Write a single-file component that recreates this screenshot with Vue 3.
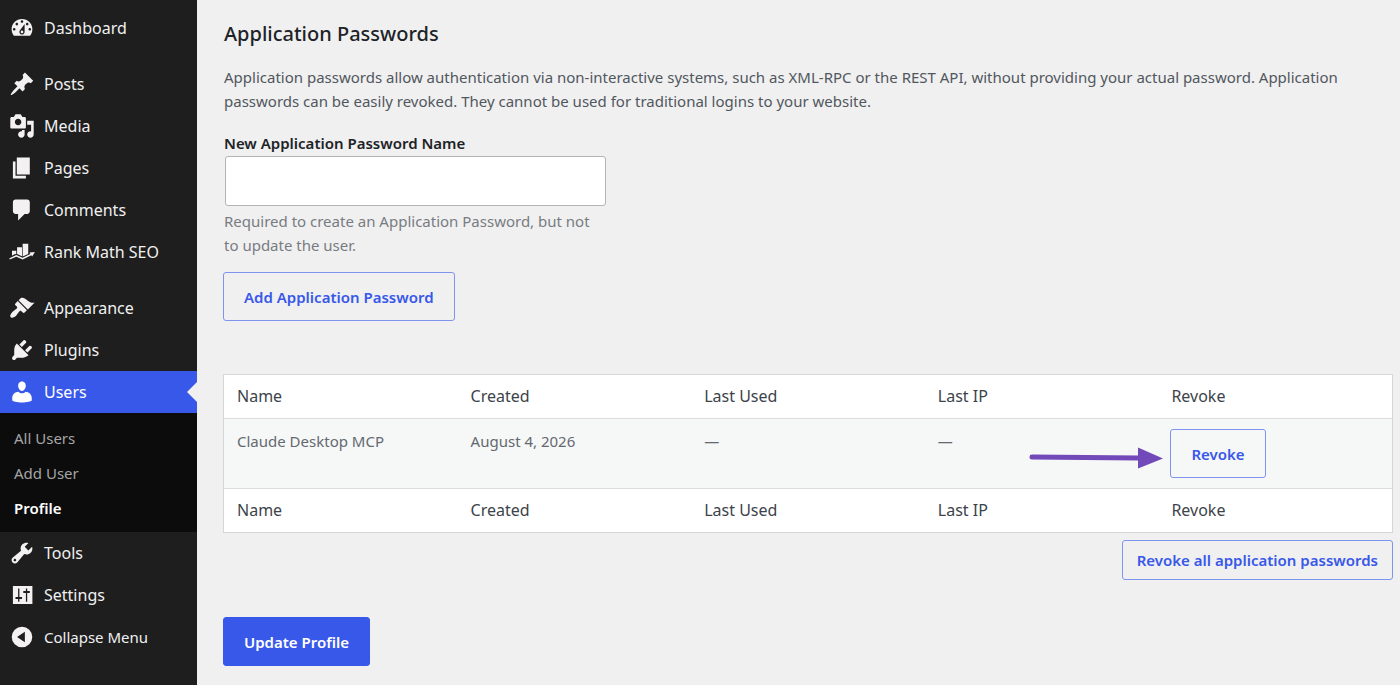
<script setup>
import { ref } from 'vue'

const icons = {
  dashboard: 'M3.76 16h12.48c1.1-1.37 1.76-3.11 1.76-5 0-4.42-3.58-8-8-8s-8 3.58-8 8c0 1.89.66 3.63 1.76 5zM10 4c.55 0 1 .45 1 1s-.45 1-1 1-1-.45-1-1 .45-1 1-1zM6 6c.55 0 1 .45 1 1s-.45 1-1 1-1-.45-1-1 .45-1 1-1zm8 0c.55 0 1 .45 1 1s-.45 1-1 1-1-.45-1-1 .45-1 1-1zm-5.37 5.55L12 7v6c0 1.1-.9 2-2 2s-2-.9-2-2c0-.57.24-1.08.63-1.45zM4 10c.55 0 1 .45 1 1s-.45 1-1 1-1-.45-1-1 .45-1 1-1zm12 0c.55 0 1 .45 1 1s-.45 1-1 1-1-.45-1-1 .45-1 1-1zm-5 3c0-.55-.45-1-1-1s-1 .45-1 1 .45 1 1 1 1-.45 1-1z',
  posts: 'M10.44 3.02l1.82-1.82 6.36 6.35-1.83 1.82c-1.05-.68-2.48-.57-3.41.36l-.75.75c-.92.93-1.04 2.35-.35 3.41l-1.83 1.82-2.41-2.41-2.8 2.79c-.42.42-3.38 2.71-3.8 2.29s1.86-3.39 2.28-3.81l2.79-2.79L4.1 9.36l1.83-1.82c1.05.69 2.48.57 3.4-.36l.75-.75c.93-.92 1.05-2.35.36-3.41z',
  media: 'M13 11V4c0-.55-.45-1-1-1h-1.67L9 1H5L3.67 3H2c-.55 0-1 .45-1 1v7c0 .55.45 1 1 1h10c.55 0 1-.45 1-1zM7 4.5c1.38 0 2.5 1.12 2.5 2.5S8.38 9.5 7 9.5 4.5 8.38 4.5 7 5.62 4.5 7 4.5zM14 6h5v10.5c0 1.38-1.12 2.5-2.5 2.5S14 17.88 14 16.5s1.12-2.5 2.5-2.5c.17 0 .34.02.5.05V9h-3V6zm-4 8.05V13h2v3.5c0 1.38-1.12 2.5-2.5 2.5S7 17.88 7 16.5 8.12 14 9.5 14c.17 0 .34.02.5.05z',
  pages: 'M6 15V2h10v13H6zm-1 1h8v2H3V5h2v11z',
  comments: 'M5 2h9c1.1 0 2 .9 2 2v7c0 1.1-.9 2-2 2h-2l-5 5v-5H5c-1.1 0-2-.9-2-2V4c0-1.1.9-2 2-2z',
  rank: 'M2.3 9h3.3v2.6l-1.4.2-1.9 1zM6.2 6.4H10v6.8l-3.8-1.6zM10.5 3.6h4.3v7.9l-4.3 1.9zM.3 14.9l5.3-2.6 4.9 2.1 5.9-2.9-.6-1.1 4.1-.4-2.1 3.5-.6-1-6.7 3.3-4.9-2.1-5 2.1z',
  appearance: 'M14.48 11.06L7.41 3.99l1.5-1.5c.5-.56 2.3-.47 3.51.32 1.21.8 1.43 1.28 2.91 2.1 1.18.64 2.45 1.26 4.45.85zm-.71.71L6.7 4.7 4.93 6.47c-.39.39-.39 1.02 0 1.41l1.06 1.06c.39.39.39 1.03 0 1.42-.6.6-1.43 1.11-2.21 1.69-.35.26-.7.53-1.01.84C1.43 14.23.4 16.08 1.4 17.07c.99 1 2.84-.03 4.18-1.36.31-.31.58-.66.85-1.02.57-.78 1.08-1.61 1.69-2.21.39-.39 1.02-.39 1.41 0l1.06 1.06c.39.39 1.02.39 1.41 0z',
  plugins: 'M13.11 4.36L9.87 7.6 8 5.73l3.24-3.24c.35-.34 1.05-.2 1.56.32.52.51.66 1.21.31 1.55zm-8 1.77l.91-1.12 9.01 9.01-1.19.84c-.71.71-2.63 1.16-3.82 1.16H6.14L4.9 17.26c-.59.59-1.54.59-2.12 0-.59-.58-.59-1.53 0-2.12l1.24-1.24v-3.88c0-1.13.4-3.19 1.09-3.89zm7.26 3.97l3.24-3.24c.34-.35 1.04-.21 1.55.31.52.51.66 1.21.31 1.55l-3.24 3.25z',
  users: 'M10 9.25c-2.27 0-2.9-3.44-2.9-3.44C6.8 4.02 7.8 2 9.97 2c2.16 0 3.2 2.02 2.9 3.81 0 0-.6 3.44-2.87 3.44zM7.3 9.8C8 10.7 9 11 10 11s2-.3 2.7-1.2c2.5 0 4.8 2.25 4.8 4.7v1.9c0 .8-3.8 1.75-7.5 1.75s-7.5-.95-7.5-1.75v-1.9c0-2.45 2.2-4.7 4.8-4.7z',
  tools: 'M16.68 9.77c-1.34 1.34-3.3 1.67-4.95.99l-5.41 6.52c-.99.99-2.59.99-3.58 0s-.99-2.59 0-3.57l6.52-5.42c-.68-1.65-.35-3.61.99-4.95 1.28-1.28 3.12-1.62 4.72-1.06l-2.89 2.89 2.82 2.82 2.86-2.87c.53 1.58.18 3.39-1.08 4.65zM3.81 16.21c.4.39 1.04.39 1.43 0 .4-.4.4-1.04 0-1.43-.39-.4-1.03-.4-1.43 0-.39.39-.39 1.03 0 1.43z',
  settings: 'M18 17V3H3v14h15zM8 11.5h2V13H8v2.2H7V13H5v-1.5h2V5h1v6.5zM14 8.5v6.7h-1V8.5h-2V7h2V5h1v2h2v1.5z',
  collapse: 'M10 2.1a7.9 7.9 0 1 0 0 15.8 7.9 7.9 0 0 0 0-15.8zM12.2 6v8L6.2 10z',
}

const menu = [
  { label: 'Dashboard', icon: 'dashboard' },
  { label: 'Posts', icon: 'posts', gap: true },
  { label: 'Media', icon: 'media' },
  { label: 'Pages', icon: 'pages' },
  { label: 'Comments', icon: 'comments' },
  { label: 'Rank Math SEO', icon: 'rank' },
  { label: 'Appearance', icon: 'appearance', gap: true },
  { label: 'Plugins', icon: 'plugins' },
  { label: 'Users', icon: 'users', active: true, children: ['All Users', 'Add User', 'Profile'] },
  { label: 'Tools', icon: 'tools' },
  { label: 'Settings', icon: 'settings' },
]

const columns = ['Name', 'Created', 'Last Used', 'Last IP', 'Revoke']
const passwords = [{ name: 'Claude Desktop MCP', created: 'August 4, 2026', used: '—', ip: '—' }]
const newName = ref('')
</script>

<template>
  <div class="admin">
    <nav class="sidebar" aria-label="Main menu">
      <ul class="menu">
        <li v-for="item in menu" :key="item.label" :class="{ gap: item.gap }">
          <a href="#" class="item" :class="{ active: item.active }">
            <svg class="icon" viewBox="0 0 20 20" aria-hidden="true"><path fill-rule="evenodd" :d="icons[item.icon]" /></svg>
            <span>{{ item.label }}</span>
          </a>
          <ul v-if="item.children" class="submenu">
            <li v-for="child in item.children" :key="child">
              <a href="#" :class="{ current: child === 'Profile' }">{{ child }}</a>
            </li>
          </ul>
        </li>
        <li>
          <button type="button" class="item collapse">
            <svg class="icon" viewBox="0 0 20 20" aria-hidden="true"><path fill-rule="evenodd" :d="icons.collapse" /></svg>
            <span>Collapse Menu</span>
          </button>
        </li>
      </ul>
    </nav>

    <main class="content">
      <h2>Application Passwords</h2>
      <p class="intro">Application passwords allow authentication via non-interactive systems, such as XML-RPC or the REST API, without providing your actual password. Application passwords can be easily revoked. They cannot be used for traditional logins to your website.</p>

      <div class="field">
        <label for="app-name">New Application Password Name</label>
        <input id="app-name" v-model="newName" type="text" aria-describedby="app-name-desc" />
        <p id="app-name-desc" class="hint">Required to create an Application Password, but not to update the user.</p>
      </div>
      <button type="button" class="btn">Add Application Password</button>

      <table class="list">
        <thead>
          <tr><th v-for="c in columns" :key="c" scope="col">{{ c }}</th></tr>
        </thead>
        <tbody>
          <tr v-for="p in passwords" :key="p.name">
            <td>{{ p.name }}</td>
            <td>{{ p.created }}</td>
            <td>{{ p.used }}</td>
            <td>{{ p.ip }}</td>
            <td class="action">
              <div class="target">
                <svg class="pointer" viewBox="0 0 134 22" aria-hidden="true">
                  <path d="M3 10L110 11" stroke="#7249b8" stroke-width="5" stroke-linecap="round" />
                  <path d="M109 .5L134 11.5 109 21.5z" fill="#7249b8" />
                </svg>
                <button type="button" class="btn">Revoke</button>
              </div>
            </td>
          </tr>
        </tbody>
        <tfoot>
          <tr><th v-for="c in columns" :key="c" scope="col">{{ c }}</th></tr>
        </tfoot>
      </table>

      <div class="bulk"><button type="button" class="btn small">Revoke all application passwords</button></div>
      <button type="submit" class="btn primary">Update Profile</button>
    </main>
  </div>
</template>

<style>
body {
  margin: 0;
  background: #f0f0f0;
}
</style>

<style scoped>
.admin {
  display: flex;
  min-height: 100vh;
  font-family: "Noto Sans", "Open Sans", sans-serif;
  font-size: 15px;
  line-height: 24px;
  color: #50575e;
}
.admin * {
  box-sizing: border-box;
}
.sidebar {
  flex: none;
  width: 197px;
  padding-top: 7px;
  background: #1e1e1e;
}
ul {
  margin: 0;
  padding: 0;
  list-style: none;
}
.gap {
  margin-top: 14px;
}
.item {
  position: relative;
  display: flex;
  align-items: center;
  gap: 9px;
  width: 100%;
  height: 42px;
  padding: 0 9px;
  color: #f0f0f1;
  font-size: 16px;
  text-decoration: none;
}
.icon {
  flex: none;
  width: 26px;
  height: 26px;
  fill: #f3f1f1;
}
.item.active {
  background: #3858e9;
  color: #fff;
}
.active .icon {
  fill: #fff;
}
.item.active::after {
  content: "";
  position: absolute;
  right: 0;
  top: 11px;
  border: 10px solid transparent;
  border-left: 0;
  border-right-color: #f0f0f0;
}
.collapse {
  border: 0;
  background: none;
  font-family: inherit;
  font-size: 15px;
  text-align: left;
}
.submenu {
  padding: 8px 0 6px;
  background: #0c0c0c;
}
.submenu a {
  display: block;
  padding: 0 14px;
  line-height: 35px;
  color: #a5a5a6;
  text-decoration: none;
}
.submenu .current {
  color: #fff;
  font-weight: 600;
}
.content {
  flex: 1;
  min-width: 0;
  padding: 20px 7px 19px 26px;
}
h2 {
  margin: 0 0 17px;
  padding-left: 1px;
  font-size: 20px;
  line-height: 28px;
  font-weight: 500;
  color: #1d2327;
}
.intro {
  margin: 0 0 18px;
  padding-left: 1px;
}
.field {
  display: flex;
  flex-direction: column;
  max-width: 383px;
  margin-bottom: 15px;
  padding-left: 1px;
}
.field label {
  margin-bottom: 1px;
  font-weight: 600;
  color: #1d2327;
}
.field input {
  height: 50px;
  margin: 0 0 3px 1px;
  padding: 0 12px;
  border: 1px solid #b4b4b6;
  border-radius: 3px;
  background: #fff;
  font: inherit;
}
.hint {
  margin: 0;
  color: #787c82;
}
.btn {
  height: 49px;
  padding: 0 20px;
  border: 1px solid #7f94f0;
  border-radius: 3px;
  background: transparent;
  font-family: inherit;
  font-size: 15px;
  font-weight: 600;
  color: #3858e9;
  white-space: nowrap;
}
.list {
  width: 100%;
  margin-top: 53px;
  border: 1px solid #d5d6d8;
  border-collapse: separate;
  border-spacing: 0;
  table-layout: fixed;
  background: #fff;
}
.list th,
.list td {
  padding: 10px 13px;
  text-align: left;
  vertical-align: top;
  font-weight: 400;
}
.list th {
  padding-top: 9px;
  font-size: 16px;
  color: #3c434a;
}
.list tbody td {
  border-top: 1px solid #dcdcde;
  border-bottom: 1px solid #dcdcde;
  background: #f6f7f7;
  color: #646970;
}
.list tbody .action {
  padding: 10px 12px;
}
.target {
  position: relative;
  display: flex;
}
.pointer {
  position: absolute;
  right: 100%;
  top: 18px;
  width: 134px;
  height: 22px;
  margin-right: 7px;
}
.bulk {
  display: flex;
  justify-content: flex-end;
  margin: 7px 0 37px;
}
.small {
  height: 40px;
  padding: 0 14px;
}
.primary {
  border-color: #3858e9;
  background: #3858e9;
  color: #fff;
}
</style>
